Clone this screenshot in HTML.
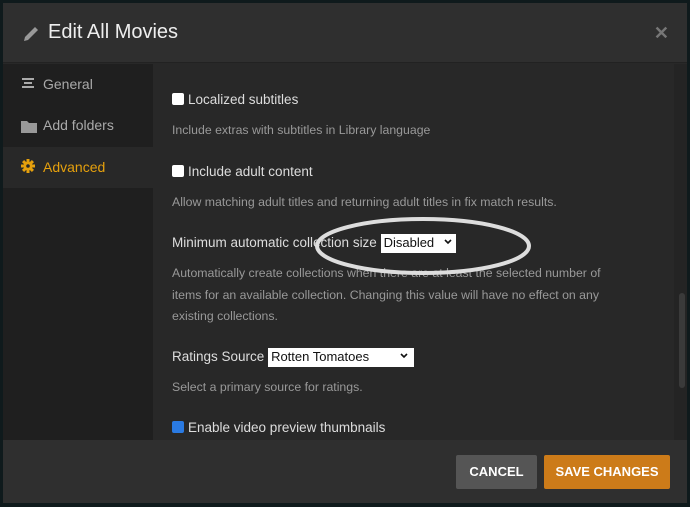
<!DOCTYPE html>
<html><head><style>
*{margin:0;padding:0;box-sizing:border-box}
body{width:690px;height:507px;background:#0f1a1c;font-family:"Liberation Sans",sans-serif;overflow:hidden;position:relative}
.m{position:absolute;left:3px;top:3px;width:684px;height:500px;background:#282828}
.hd{position:absolute;left:0;top:0;width:684px;height:60px;background:#2f2f2f;border-bottom:1px solid #222}
.hd h1{position:absolute;left:45px;top:18px;font-size:20px;font-weight:normal;color:#eee}
.x{position:absolute;right:18px;top:20px;color:#777;font-size:18px;font-weight:bold}
.sb{position:absolute;left:0;top:61px;width:150px;height:376px;background:#1f1f1f}
.it{position:absolute;left:0;width:150px;height:41px;font-size:14px;color:#aaa;padding:12px 0 0 40px}
.it.a{background:#282828;color:#e5a00d}
.ct{position:absolute;left:150px;top:61px;width:521px;height:376px;overflow:hidden;font-size:13px}
.scr{position:absolute;left:671px;top:61px;width:13px;height:376px;background:#242424}
.thumb{position:absolute;left:676px;top:290px;width:6px;height:95px;background:#3a3a3a;border-radius:3px}
.lbl{position:absolute;left:19px;color:#ddd;font-size:13.5px}
.d{position:absolute;left:19px;color:#999;font-size:12.3px;line-height:21.5px;width:455px}
.cb{display:inline-block;width:12px;height:12px;background:#fff;border-radius:2px;vertical-align:-1px;margin-right:4px}
.sel{display:inline-block;background:#fff;color:#111;font-size:13px;padding:1px 3px;height:19px;vertical-align:middle;position:relative}
.chev{position:absolute;right:4px;top:5px}
.ft{position:absolute;left:0;top:437px;width:684px;height:63px;background:#2f2f2f}
.btn{position:absolute;top:15px;height:34px;color:#fff;font-weight:bold;font-size:13px;text-align:center;line-height:34px;border-radius:2px}
</style></head><body>
<div class="m">
<div class="hd">
<svg style="position:absolute;left:19px;top:22px" width="18" height="18" viewBox="0 0 18 18"><path d="M2 16 L3 12 L13 2 L16 5 L6 15 Z" fill="#999"/></svg>
<h1>Edit All Movies</h1><div class="x">✕</div></div>
<div class="sb">
<div class="it" style="top:0"><svg style="position:absolute;left:18px;top:14px" width="14" height="12"><rect x="1" y="0" width="12" height="2" fill="#aaa"/><rect x="3" y="4" width="8" height="2" fill="#aaa"/><rect x="1" y="8" width="12" height="2" fill="#aaa"/></svg>General</div>
<div class="it" style="top:41px"><svg style="position:absolute;left:18px;top:15px" width="18" height="13"><path d="M0 1h6l2 2h8v10H0z" fill="#999"/></svg>Add folders</div>
<div class="it a" style="top:83px"><svg style="position:absolute;left:18px;top:12px" width="14" height="14" viewBox="0 0 14 14"><g fill="#e5a00d"><circle cx="7" cy="7" r="4.5"/><rect x="5.5" y="0" width="3" height="14"/><rect x="0" y="5.5" width="14" height="3"/><rect x="5.5" y="0" width="3" height="14" transform="rotate(45 7 7)"/><rect x="5.5" y="0" width="3" height="14" transform="rotate(-45 7 7)"/></g><circle cx="7" cy="7" r="1.8" fill="#282828"/></svg>Advanced</div>
</div>
<div class="ct">
<div class="lbl" style="top:28px"><span class="cb"></span>Localized subtitles</div>
<div class="d" style="top:56px">Include extras with subtitles in Library language</div>
<div class="lbl" style="top:100px"><span class="cb"></span>Include adult content</div>
<div class="d" style="top:128px">Allow matching adult titles and returning adult titles in fix match results.</div>
<div class="lbl" style="top:170px">Minimum automatic collection size <span class="sel" style="width:75px">Disabled<svg class="chev" width="8" height="6"><path d="M1 1l3 3 3-3" stroke="#111" stroke-width="1.6" fill="none"/></svg></span></div>
<div class="d" style="top:199px">Automatically create collections when there are at least the selected number of items for an available collection. Changing this value will have no effect on any existing collections.</div>
<div class="lbl" style="top:284px">Ratings Source <span class="sel" style="width:146px">Rotten Tomatoes<svg class="chev" style="right:6px" width="8" height="6"><path d="M1 1l3 3 3-3" stroke="#111" stroke-width="1.6" fill="none"/></svg></span></div>
<div class="d" style="top:313px">Select a primary source for ratings.</div>
<div class="lbl" style="top:356px"><span class="cb" style="background:#2a7ae2"></span>Enable video preview thumbnails</div>
</div>
<div class="scr"></div><div class="thumb"></div>
<svg style="position:absolute;left:310px;top:212px" width="220" height="62"><ellipse cx="110" cy="31" rx="106" ry="27" fill="none" stroke="#ddd" stroke-width="4"/></svg>
<div class="ft">
<div class="btn" style="left:453px;width:81px;background:#555">CANCEL</div>
<div class="btn" style="left:541px;width:126px;background:#cc7b19">SAVE CHANGES</div>
</div>
</div>
</body></html>
